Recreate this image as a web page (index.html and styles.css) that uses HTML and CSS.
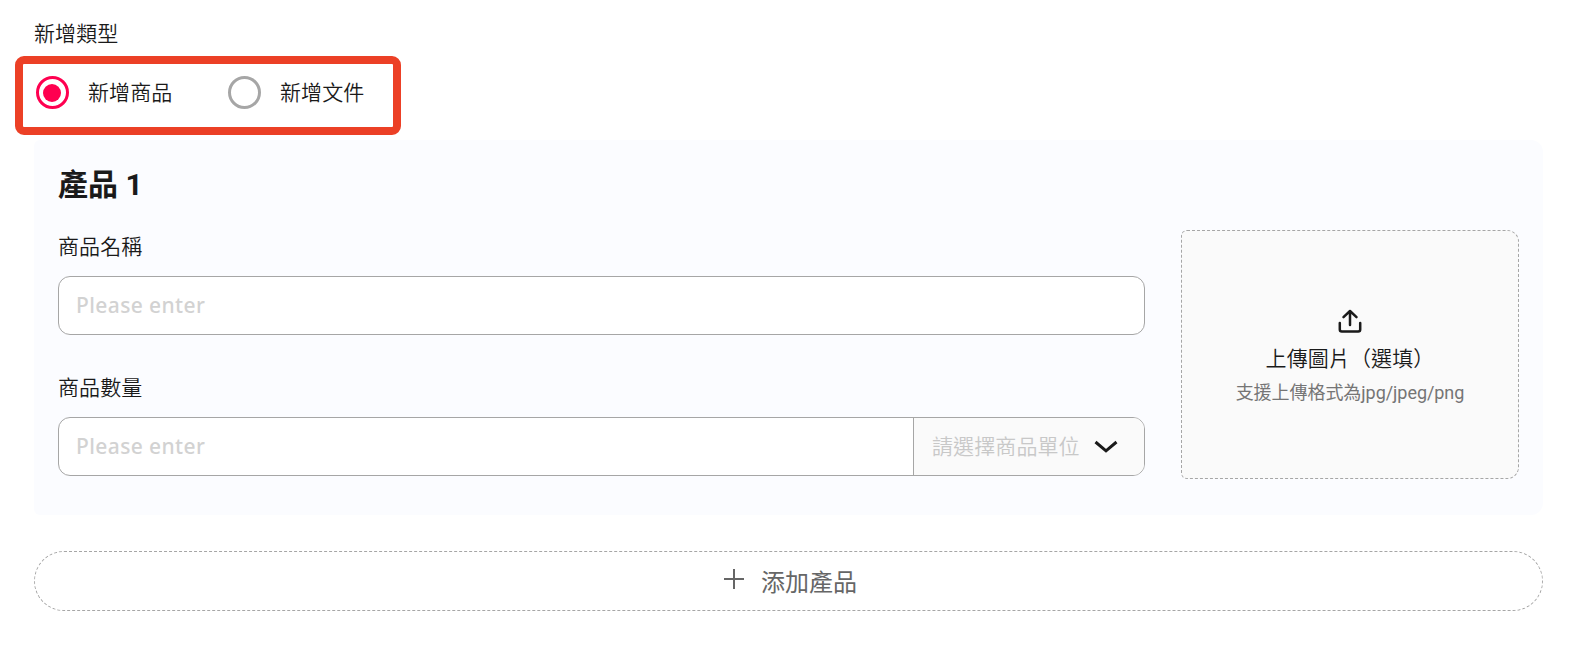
FILE: index.html
```html
<!DOCTYPE html>
<html lang="zh-Hant">
<head>
    <meta charset="UTF-8">
    <meta name="viewport" content="width=device-width, initial-scale=1.0">
    <title>新增產品</title>
    <link rel="stylesheet" href="styles.css">
</head>
<body>
    <div class="type-title">新增類型</div>
    <div class="type-box">
        <div class="radio active"><span class="dot"></span>新增商品</div>
        <div class="radio"><span class="dot"></span>新增文件</div>
    </div>

    <div class="card">
        <h2>產品 1</h2>
        <div class="content">
            <div class="form">
                <div class="label">商品名稱</div>
                <div class="field">
                    <input type="text" placeholder="Please enter">
                </div>
                <div class="label">商品數量</div>
                <div class="field">
                    <input type="text" placeholder="Please enter">
                    <div class="unit">
                        <span>請選擇商品單位</span>
                        <svg width="24" height="14" viewBox="0 0 24 14">
                            <path d="M1.5 2L12 10.8L22.5 2" fill="none" stroke="#1a1a1a" stroke-width="3"/>
                        </svg>
                    </div>
                </div>
            </div>
            <div class="upload">
                <svg width="24" height="24" viewBox="0 0 24 24" fill="none" stroke="#1a1a1a" stroke-width="2.5" stroke-linecap="round" stroke-linejoin="round">
                    <path d="M12 16V2M5.5 8.2L12 2L18.5 8.2"/>
                    <path d="M1.8 14V20.5Q1.8 22.5 3.8 22.5H20.2Q22.2 22.5 22.2 20.5V14"/>
                </svg>
                <div class="upload-text">上傳圖片（選填）</div>
                <div class="upload-tip">支援上傳格式為jpg/jpeg/png</div>
            </div>
        </div>
    </div>

    <div class="add">
        <svg width="20" height="20" viewBox="0 0 20 20">
            <path d="M10 0V20M0 10H20" stroke="#666" stroke-width="2"/>
        </svg>
        <span>添加產品</span>
    </div>
</body>
</html>
```
FILE: styles.css
```css
*{
    box-sizing: border-box;
}
body{
    margin: 0;
    padding: 22px 33px 0 34px;
    background-color: #fff;
    color: #1a1a1a;
    font-family: Roboto, "Noto Sans CJK TC", sans-serif;
    font-size: 21px;
    line-height: 24px;
}
.type-title{
    height: 24px;
}
.type-title, .radio, .label, .unit, .upload-text{
    font-weight: 350;
    letter-spacing: 0.1px;
}
/* 類型選擇 */
.type-box{
    display: flex;
    width: 386px;
    height: 79px;
    margin: 10px 0 5px -19px;
    padding: 12px 0 0 13px;
    border: 8px solid #ec4026;
    border-radius: 9px;
    background: #fff;
}
.radio{
    display: flex;
    align-items: center;
    height: 33px;
    margin-right: 55.6px;
    white-space: nowrap;
}
.dot{
    width: 33px;
    height: 33px;
    margin-right: 19px;
    border: 3px solid #a6a6a6;
    border-radius: 50%;
}
.radio.active .dot{
    padding: 5px 5px 4px 4px;
    border-color: #ff0050;
}
.radio.active .dot::before{
    content: "";
    display: block;
    height: 18px;
    border-radius: 50%;
    background-color: #ff0050;
}
/* 產品卡片 */
.card{
    height: 375px;
    padding: 24px;
    border-radius: 6px 12px 12px 6px;
    background-color: #fbfcff;
}
h2{
    margin: 0;
    font-size: 30px;
    line-height: 42px;
}
.content{
    display: flex;
    justify-content: space-between;
    margin-top: 24px;
}
.form{
    width: 1087px;
}
.label{
    height: 24px;
    margin: 5px 0 17px;
}
.field{
    display: flex;
    height: 59px;
    margin-bottom: 41px;
    border: 1px solid #a6a6a6;
    border-radius: 12px;
    background: #fff;
    overflow: hidden;
}
.field input{
    flex: 1;
    padding: 0 17px 2px;
    border: none;
    outline: none;
    background: none;
    font-family: "Noto Sans", sans-serif;
    font-size: 21px;
    font-weight: 500;
    letter-spacing: 0.4px;
}
.field input::placeholder{
    color: #d2d2d2;
}
.unit{
    display: flex;
    align-items: center;
    width: 231px;
    padding-left: 18px;
    border-left: 1px solid #a6a6a6;
    background-color: #fafafa;
    color: #c8c8c8;
}
.unit svg{
    margin: 1px 0 0 14px;
}
/* 上傳 */
.upload{
    display: flex;
    flex-direction: column;
    align-items: center;
    width: 338px;
    height: 249px;
    padding-top: 78px;
    border: 1px dashed #a6a6a6;
    border-radius: 6px 12px 12px 6px;
    background-color: #fafafa;
}
.upload-text{
    margin-top: 14px;
}
.upload-tip{
    margin-top: 10px;
    color: #757575;
    font-size: 18px;
    letter-spacing: -0.05px;
}
.add{
    display: flex;
    justify-content: center;
    align-items: center;
    height: 60px;
    margin-top: 36px;
    padding: 0 0 1px 4px;
    border: 1px dashed #a6a6a6;
    border-radius: 30px;
    color: #666;
    font-size: 24px;
}
.add svg{
    margin: 0 17px 3px 0;
}
.add span{
    margin-top: 5px;
}
```
